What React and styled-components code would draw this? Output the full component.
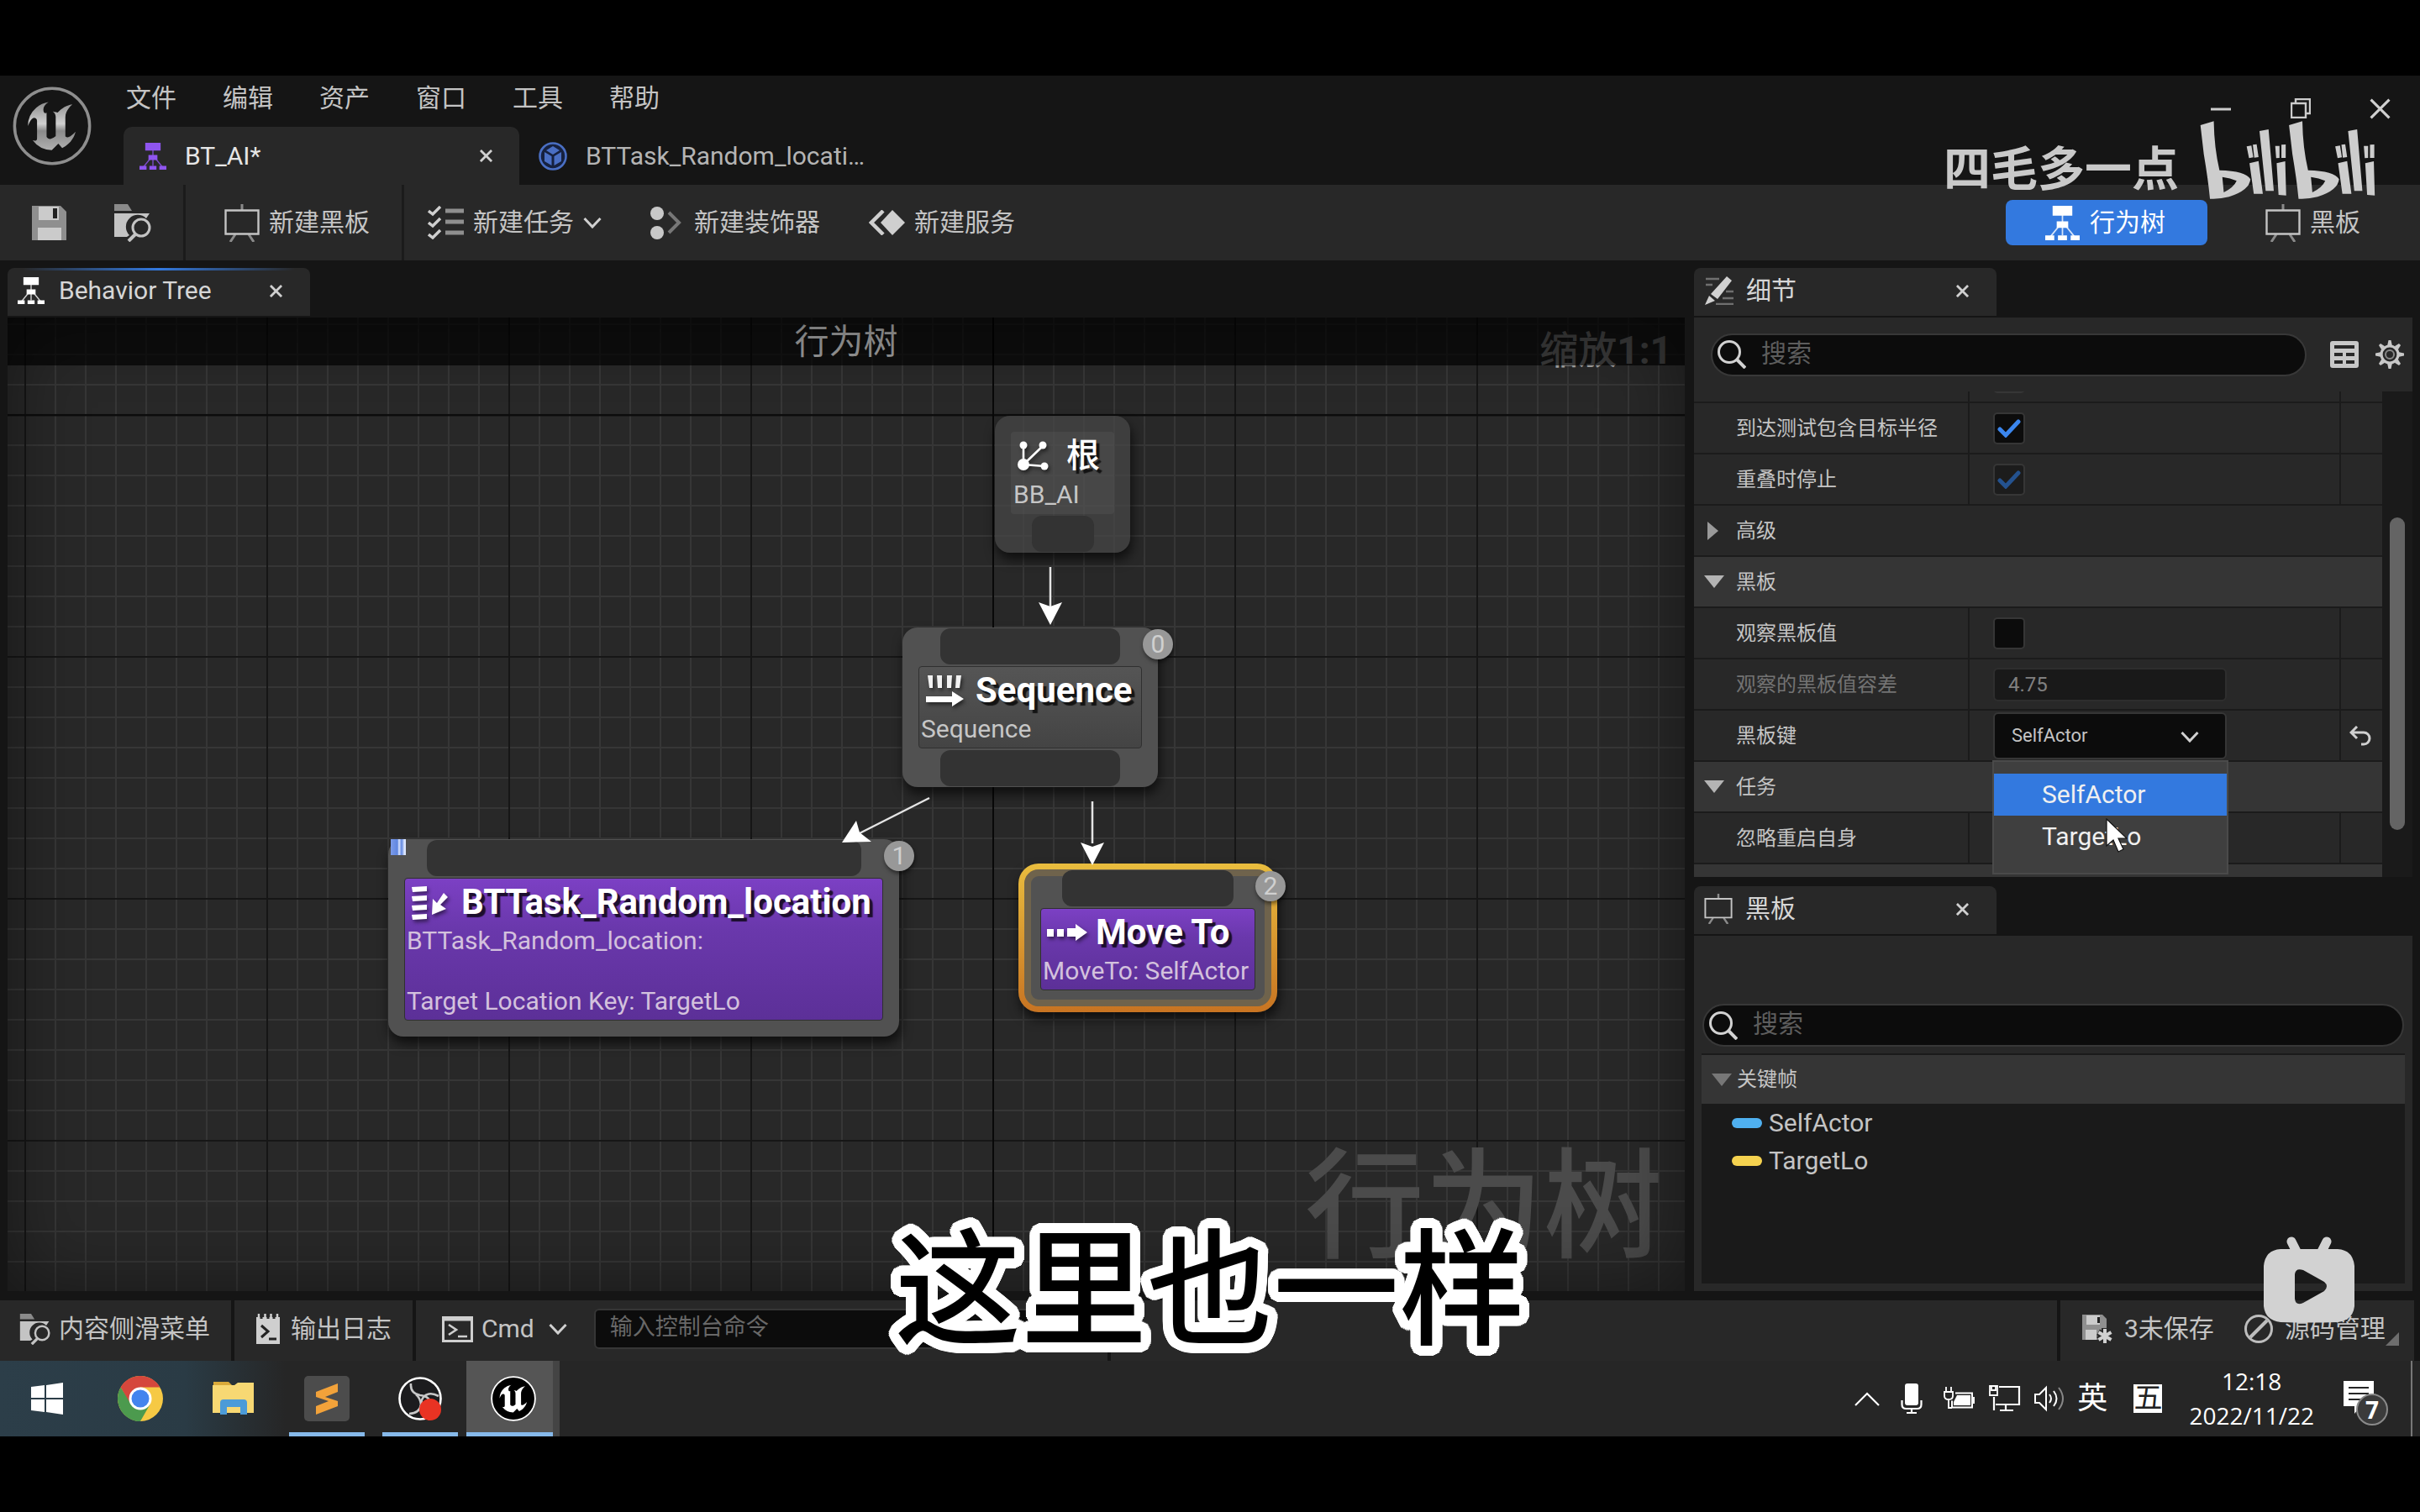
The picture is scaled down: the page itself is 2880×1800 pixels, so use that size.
import React from "react";
import styled, { createGlobalStyle, css } from "styled-components";

const c = {
  frame: "#151515",
  panel: "#282828",
  header: "#353535",
  field: "#0c0c0c",
  line: "#1b1b1b",
  text: "#c4c4c4",
  dim: "#6b6b6b",
  blue: "#3379df",
};

const Global = createGlobalStyle`
  * { box-sizing: border-box; }
  body { margin: 0; background: #000; }
  button, input, select { font: inherit; color: inherit; margin: 0; padding: 0; border: 0; background: none; }
  svg { display: block; flex: none; }
`;

/* ---------- icons ---------- */

const Svg = ({ w, h, vb, children, ...rest }) => (
  <svg width={w} height={h} viewBox={vb || `0 0 ${w} ${h}`} fill="none" aria-hidden="true" {...rest}>
    {children}
  </svg>
);

const U_MARK =
  "M19.13 13.729c-.206.997-1.126 3.557-4.06 4.942l-1.179-1.325-1.988 2a7.338 7.338 0 01-5.804-2.978 2.859 2.859 0 00.65.123c.326.006.678-.114.678-.66v-5.394a.89.89 0 00-1.116-.89c-.92.212-1.656 2.509-1.656 2.509a7.304 7.304 0 012.528-5.597 7.408 7.408 0 013.73-1.721c-1.006.573-1.57 1.507-1.57 2.29 0 1.262.76 1.109.984.923v7.28a1.157 1.157 0 00.148.256 1.075 1.075 0 00.88.445c.76 0 1.747-.868 1.747-.868V9.172c0-.6-.452-1.324-.905-1.572 0 0 .838.149 1.484.346a5.537 5.537 0 01.387-.425c1.508-1.48 2.929-1.902 4.112-2.112 0 0-2.151 1.69-2.151 3.96 0 1.687.043 5.801.043 5.801.799.771 1.986-.342 3.059-1.441Z";

const UnrealLogo = () => (
  <Svg w={94} h={94} vb="0 0 24 24">
    <defs>
      <linearGradient id="metal" x1="0" y1="0" x2="0" y2="1">
        <stop offset="0" stopColor="#8c8c8c" />
        <stop offset="0.45" stopColor="#d0d0d0" />
        <stop offset="0.6" stopColor="#8a8a8a" />
        <stop offset="1" stopColor="#b0b0b0" />
      </linearGradient>
    </defs>
    <circle cx="12" cy="12" r="11.4" stroke="#8e8e8e" strokeWidth="0.9" />
    <path d={U_MARK} fill="url(#metal)" />
  </Svg>
);

const UnrealApp = () => (
  <Svg w={54} h={54} vb="0 0 24 24">
    <circle cx="12" cy="12" r="11.5" fill="#000" stroke="#fff" strokeWidth="0.8" />
    <path d={U_MARK} fill="#fff" />
  </Svg>
);

const TreeIcon = ({ w = 32, h = 34, color = "#fff" }) => (
  <Svg w={w} h={h} vb="0 0 42 42">
    <g stroke={color} strokeWidth="1.8" opacity=".8">
      <path d="M21 10V36M19 22L6 38M23 22L36 38" />
    </g>
    <g fill={color}>
      <path d="M9 0h24v12H9zM14 19h14v8H14zM0 36h11v6H0zM15.500 36h11v6h-11zM31 36h11v6H31z" />
    </g>
  </Svg>
);

const TaskAssetIcon = () => (
  <Svg w={34} h={34}>
    <circle cx="17" cy="17" r="15.500" fill="#16213f" stroke="#4a6fc4" strokeWidth="2.600" />
    <path d="M17 5l8 5-8 5-8-5zM7 12l8.500 5v11L7 23zM27 12l-8.500 5v11L27 23z" fill="#4a6fc4" />
  </Svg>
);

const CloseIcon = ({ s = 15, t = 3 }) => (
  <Svg w={s} h={s} vb="0 0 16 16">
    <path d="M1 1L15 15M15 1L1 15" stroke="#d0d0d0" strokeWidth={t} />
  </Svg>
);

const SaveIcon = () => (
  <Svg w={41} h={41}>
    <path d="M0 0h34l7 7v34H0z" fill="#8f8f8f" />
    <path d="M8 1h24v16H8zM7 26h28v15H7z" fill="#cbcbcb" />
    <path d="M25 3h5v12h-5z" fill="#222" />
  </Svg>
);

const BrowseIcon = ({ s = 45 }) => (
  <Svg w={s} h={s} vb="0 0 45 45">
    <path d="M1 8V0h16l5 8z" fill="#8a8a8a" />
    <path d="M1 11h42l-4 6a13 13 0 0 0-20 20l-3 2H1z" fill="#c4c4c4" />
    <circle cx="33" cy="28" r="10" stroke="#c4c4c4" strokeWidth="3" />
    <path d="M26 36l-8 8" stroke="#c4c4c4" strokeWidth="4" />
  </Svg>
);

const EaselIcon = ({ w = 42, h = 45 }) => (
  <Svg w={w} h={h} vb="0 0 42 45">
    <path d="M21 0v7M13 36l-6 9M29 36l6 9" stroke="#8a8a8a" strokeWidth="3" />
    <path d="M1.500 7.500h39v28h-39z" stroke="#c4c4c4" strokeWidth="2.400" />
  </Svg>
);

const TasksIcon = () => (
  <Svg w={43} h={40}>
    <path d="M1 6l5 4 9-9M1 20l5 4 9-9M1 34l5 4 9-9" stroke="#d0d0d0" strokeWidth="3.400" />
    <path d="M21 6h22M21 19h22M21 32h22" stroke="#8f8f8f" strokeWidth="5" />
  </Svg>
);

const DecoratorIcon = () => (
  <Svg w={41} h={40}>
    <circle cx="8" cy="9" r="8" fill="#c8c8c8" />
    <circle cx="8" cy="32" r="8" fill="#c8c8c8" />
    <path d="M22 8l12 12-12 12" stroke="#777" strokeWidth="4" />
  </Svg>
);

const ServiceIcon = () => (
  <Svg w={43} h={30}>
    <path d="M28 0l15 15-15 15-14-15z" fill="#cfcfcf" />
    <path d="M17 1L3 15l14 14" stroke="#cfcfcf" strokeWidth="4.500" />
  </Svg>
);

const Chevron = ({ w = 22, color = "#d0d0d0", t = 3 }) => (
  <Svg w={w} h={14} vb="0 0 22 14">
    <path d="M1.500 2L11 12 20.500 2" stroke={color} strokeWidth={t} />
  </Svg>
);

const PencilIcon = () => (
  <Svg w={36} h={34}>
    <path d="M2 3h16M2 10h8M26 18h9M22 26h13M14 33h21" stroke="#6f6f6f" strokeWidth="2.500" />
    <path d="M27 0l6 5-17 22-8-6zM6 23l7 6-12 5z" fill="#d0d0d0" />
  </Svg>
);

const SearchIcon = () => (
  <Svg w={34} h={34}>
    <circle cx="14" cy="14" r="12.500" stroke="#d2d2d2" strokeWidth="3" />
    <path d="M23 23l10 10" stroke="#d2d2d2" strokeWidth="4" />
  </Svg>
);

const GridIcon = () => (
  <Svg w={34} h={32}>
    <rect width="34" height="32" rx="3" fill="#c8c8c8" />
    <path d="M5 5h24v4H5zM5 14h10v4H5zM19 14h10v4H19zM5 23h10v4H5zM19 23h10v4H19z" fill="#282828" />
  </Svg>
);

const GearIcon = () => (
  <Svg w={34} h={34} vb="-17 -17 34 34">
    {[0, 45, 90, 135, 180, 225, 270, 315].map((a) => (
      <path key={a} d="M-2.800 -11L-1.500 -17h3L2.800 -11z" fill="#c8c8c8" transform={`rotate(${a})`} />
    ))}
    <circle r="10" stroke="#c8c8c8" strokeWidth="3.200" />
    <circle r="5" stroke="#888" strokeWidth="2" />
  </Svg>
);

const Tick = ({ dim }) => (
  <Svg w={28} h={22}>
    <path d="M3 12l7 7L25 3" stroke={dim ? "#24528f" : "#3b86ee"} strokeWidth="5" strokeLinecap="round" />
  </Svg>
);

const ResetIcon = () => (
  <Svg w={27} h={24}>
    <path d="M9 1L2 8l7 7M2 8h15a7 7 0 0 1 0 14h-3" stroke="#d0d0d0" strokeWidth="3" />
  </Svg>
);

const Cursor = styled.svg`
  position: absolute;
  left: 133px;
  top: 67px;
  pointer-events: none;
`;

const TriRight = () => (
  <Svg w={15} h={24}>
    <path d="M1 1l13 11L1 23z" fill="#9a9a9a" />
  </Svg>
);
const TriDown = ({ color = "#b4b4b4" }) => (
  <Svg w={24} h={15}>
    <path d="M0 0h24L12 15z" fill={color} />
  </Svg>
);

const RootIcon = () => (
  <Svg w={38} h={36}>
    <path d="M7 28V5M7 28L31 5M7 28l25 2" stroke="#fff" strokeWidth="2.600" />
    <circle cx="7" cy="28" r="7" fill="#fff" />
    <circle cx="7" cy="5" r="4.500" fill="#fff" />
    <circle cx="30" cy="5" r="4.500" fill="#fff" />
    <circle cx="32" cy="30" r="4.500" fill="#fff" />
  </Svg>
);

const SequenceIcon = () => (
  <Svg w={46} h={38}>
    <path d="M3 1h6v15H5zM14 1h6v15h-5zM26 1h6l-1 15h-5zM37 1h6l-2 15h-5z" fill="#f2f2f2" />
    <path d="M1 26h31v-6l14 9-14 9v-5H1z" fill="#fff" />
  </Svg>
);

const TaskNodeIcon = () => (
  <Svg w={46} h={41}>
    <path d="M1 2l18-1v6L2 8zM1 13l18-1v6L2 19zM1 24l18-1v6L2 30zM1 35l18-1v6L2 41z" fill="#fff" />
    <path d="M39 9l5 5-9 9 7 5-17 7 1-19 5 5z" fill="#fff" />
  </Svg>
);

const MoveIcon = () => (
  <Svg w={48} h={20}>
    <path d="M0 6h8v9H0zM12 6h8v9h-8zM24 5h10V0l14 10-14 10v-5H24z" fill="#fff" />
  </Svg>
);

const LogIcon = () => (
  <Svg w={28} h={36}>
    <path d="M0 4h28v32H0z" fill="#cfcfcf" />
    <path d="M3 0v9M10.500 0v9M17.500 0v9M25 0v9" stroke="#cfcfcf" strokeWidth="2.500" />
    <path d="M6 0v6M14 0v6M21 0v6" stroke="#282828" strokeWidth="3" />
    <path d="M6 14l8 7-8 7M15 30h9" stroke="#222" strokeWidth="3" />
  </Svg>
);

const CmdIcon = () => (
  <Svg w={37} h={31}>
    <path d="M1.500 1.500h34v28h-34zM1 4h35" stroke="#cfcfcf" strokeWidth="3" />
    <path d="M8 10l9 6-9 6M19 24h11" stroke="#cfcfcf" strokeWidth="2.600" />
  </Svg>
);

const UnsavedIcon = () => (
  <Svg w={36} h={34}>
    <path d="M0 0h24l5 5v25H0z" fill="#8f8f8f" />
    <path d="M5 1h16v11H5zM4 18h13v12H4z" fill="#cbcbcb" />
    <path d="M18 3h3v7h-3z" fill="#222" />
    <path d="M27 16v18M19 21l16 9M35 21l-16 9" stroke="#282828" strokeWidth="8" />
    <path d="M27 17v17M19.500 21l15 9M34.500 21l-15 9" stroke="#d0d0d0" strokeWidth="4" />
  </Svg>
);

const NoSourceIcon = () => (
  <Svg w={34} h={34}>
    <circle cx="17" cy="17" r="15.500" stroke="#bdbdbd" strokeWidth="3" />
    <path d="M27 7L7 27" stroke="#bdbdbd" strokeWidth="4" />
  </Svg>
);

const WindowsIcon = () => (
  <Svg w={38} h={38}>
    <path d="M0 5l16-2v15H0zM18 3l20-3v18H18zM0 20h16v15L0 33zM18 20h20v18l-20-3z" fill="#fff" />
  </Svg>
);

const ChromeIcon = () => (
  <Svg w={54} h={54} vb="-27 -27 54 54">
    <circle r="27" fill="#f6c944" />
    <path d="M-23.400 -13.500A27 27 0 0 1 23.400 -13.500H0L-12 7z" fill="#d5473c" />
    <path d="M-23.400 -13.500A27 27 0 0 0 0 27L11.500 7-11 7z" fill="#4c9a4e" />
    <circle r="13.500" fill="#fff" />
    <circle r="10.500" fill="#4384ee" />
  </Svg>
);

const FolderIcon = () => (
  <Svg w={50} h={40}>
    <path d="M1 0h18l5 5H1z" fill="#d9a93a" />
    <path d="M0 4h26l4-3h19v36H0z" fill="#f7d873" />
    <path d="M9 39V25q0-4 4-4h24q4 0 4 4v14h-8V30H17v9z" fill="#4c9bd8" />
  </Svg>
);

const SublimeIcon = () => (
  <Svg w={54} h={54}>
    <rect width="54" height="54" rx="5" fill="#4c4c4c" />
    <path d="M14 19l26-10v10l-15 6 15 5v6l-26 10v-10l15-6-15-5z" fill="#f2a23a" />
  </Svg>
);

const ObsIcon = () => (
  <Svg w={54} h={54}>
    <circle cx="27" cy="27" r="24.500" fill="#1c1c1e" stroke="#fff" strokeWidth="2.600" />
    <path d="M16 9Q15 21 27 23Q37 24 39 31" stroke="#c8c8c8" strokeWidth="2.600" />
    <path d="M49 24Q38 18 31 25Q27 30 29 36" stroke="#c8c8c8" strokeWidth="2.600" />
    <path d="M14 45Q27 44 28 34Q27 26 22 22" stroke="#c8c8c8" strokeWidth="2.600" />
    <circle cx="39" cy="40" r="13" fill="#e93323" />
  </Svg>
);

const TrayUp = () => (
  <Svg w={30} h={17}>
    <path d="M1 16L15 2l14 14" stroke="#fff" strokeWidth="2.200" />
  </Svg>
);
const MicIcon = () => (
  <Svg w={26} h={36}>
    <rect x="5" width="16" height="26" rx="3" fill="#fff" />
    <path d="M1.500 20v5q0 5 5 5h13q5 0 5-5v-5M13 30v5M7 35h12" stroke="#fff" strokeWidth="2.200" />
  </Svg>
);
const BatteryIcon = () => (
  <Svg w={38} h={28}>
    <path d="M3 0v5M9 0v5M1 6h10v5q0 4-5 4-5 0-5-4zM6 15v10h4" stroke="#fff" strokeWidth="1.800" />
    <path d="M14 7.500h20v17H10v-8M36 12v8" stroke="#fff" strokeWidth="2" />
    <path d="M16 10h16v12H12v-4z" fill="#fff" />
  </Svg>
);
const NetworkIcon = () => (
  <Svg w={38} h={32}>
    <path d="M12 2h24v21H8M20 23v7M13 30h16M6 14v16" stroke="#fff" strokeWidth="2.200" />
    <path d="M1 1h9v11H1zM3 1v5h5V1" stroke="#fff" strokeWidth="1.800" />
  </Svg>
);
const SpeakerIcon = () => (
  <Svg w={38} h={32}>
    <path d="M1 11h5l8-8v26l-8-8H1z" stroke="#fff" strokeWidth="2" />
    <path d="M18 11q4 5 0 10M23 7q7 9 0 18" stroke="#fff" strokeWidth="2" />
    <path d="M29 3q10 13 0 26" stroke="#888" strokeWidth="2" />
  </Svg>
);
const NoteIcon = () => (
  <Svg w={54} h={54}>
    <path d="M0 0h36v30H20l-7 9v-9H0z" fill="#fff" />
    <path d="M6 8h24M6 15h24M6 22h15" stroke="#262626" strokeWidth="2.200" />
    <circle cx="34" cy="34" r="18" fill="#3b3b3b" stroke="#8a8a8a" strokeWidth="2" />
  </Svg>
);

/* ---------- page frame ---------- */

const Screen = styled.div`
  position: relative;
  display: flex;
  flex-direction: column;
  min-height: 100vh;
  padding: 90px 0;
  background: #000;
  color: ${c.text};
  font: 400 30px/36px Roboto, "Noto Sans CJK SC", sans-serif;
  overflow: hidden;
`;

const Editor = styled.main`
  flex: 1;
  display: flex;
  flex-direction: column;
  background: ${c.frame};
`;

const TitleBar = styled.header`
  display: flex;
  height: 130px;
`;
const LogoSlot = styled.div`
  width: 147px;
  padding: 13px 15px;
`;
const TitleMain = styled.div`
  flex: 1;
  display: flex;
  flex-direction: column;
  justify-content: space-between;
`;
const MenuBar = styled.nav`
  display: flex;
  gap: 55px;
  padding: 9px 3px;
`;
const MenuItem = styled.button``;
const DocTabs = styled.div`
  display: flex;
`;
const DocTab = styled.div`
  display: flex;
  align-items: center;
  width: 471px;
  height: 69px;
  padding: 0 32px 0 ${(p) => (p.$active ? 19 : 23)}px;
  gap: 22px;
  border-radius: 10px 10px 0 0;
  background: ${(p) => (p.$active ? c.panel : "none")};
  color: ${(p) => (p.$active ? "#e6e6e6" : "#b4b4b4")};
`;
const TabText = styled.span`
  flex: 1;
  white-space: nowrap;
`;
const TabClose = styled.button`
  display: grid;
  place-items: center;
  width: 16px;
  height: 32px;
`;
const WindowButtons = styled.div`
  display: flex;
`;
const WindowButton = styled.button`
  display: grid;
  place-items: center;
  width: 95px;
  height: 78px;
`;

const Toolbar = styled.div`
  display: flex;
  height: 90px;
  background: ${c.panel};
`;
const ToolGroup = styled.div`
  display: flex;
  align-items: center;
  gap: ${(p) => p.$gap || 56}px;
  padding: 0 38px 0 ${(p) => p.$left}px;
  & + & { border-left: 3px solid ${c.line}; }
  &:last-child { border: 0; margin-left: auto; padding-right: 71px; }
`;
const ToolButton = styled.button`
  display: flex;
  align-items: center;
  gap: ${(p) => p.$gap || 11}px;
  white-space: nowrap;
`;
const ModeButton = styled(ToolButton)`
  height: 54px;
  justify-content: center;
  ${(p) =>
    p.$active &&
    css`
      width: 240px;
      padding-right: 4px;
      border-radius: 8px;
      background: ${c.blue};
      color: #fff;
    `}
`;

const Workspace = styled.div`
  flex: 1;
  display: grid;
  grid-template-columns: minmax(0, 1fr) 855px;
  gap: 11px;
  padding: 9px 9px 11px;
`;
const Column = styled.div`
  display: flex;
  flex-direction: column;
  gap: 11px;
  min-width: 0;
`;
const Dock = styled.section`
  display: flex;
  flex-direction: column;
  gap: 2px;
  flex: ${(p) => (p.$grow ? "1" : "none")};
`;
const DockTab = styled.div`
  display: flex;
  align-items: center;
  gap: ${(p) => p.$gap || 17}px;
  width: 360px;
  height: 57px;
  padding: 0 33px 3px 12px;
  border-radius: 8px 8px 0 0;
  background: ${(p) =>
    p.$focused
      ? `linear-gradient(90deg, transparent 5%, ${c.blue} 50%, transparent 95%) top / 100% 3px no-repeat, ${c.panel}`
      : c.panel};
  color: #d6d6d6;
`;

/* ---------- graph ---------- */

const Graph = styled.div`
  position: relative;
  flex: 1;
  overflow: hidden;
  background-color: #282828;
  background-image:
    linear-gradient(90deg, #080808 2px, transparent 2px),
    linear-gradient(#0c0c0c 2px, transparent 2px),
    linear-gradient(90deg, #161616 2px, transparent 2px),
    linear-gradient(#161616 2px, transparent 2px),
    linear-gradient(90deg, #363636 2px, transparent 2px),
    linear-gradient(#363636 2px, transparent 2px);
  background-size: 3000px 100%, 100% 3000px, 288px 100%, 100% 288px, 36px 100%, 100% 36px;
  background-position: 1172px 0, 0 115px, 20px 0, 0 115px, 20px 0, 0 7px;
  &::after {
    content: "";
    position: absolute;
    inset: 0;
    box-shadow: inset 0 0 90px rgba(0, 0, 0, 0.45);
    pointer-events: none;
  }
`;
const GraphTitle = styled.h1`
  position: absolute;
  inset: 0 0 auto;
  height: 57px;
  margin: 0;
  background: rgba(0, 0, 0, 0.66);
  color: #979797;
  font-size: 41px;
  font-weight: 400;
  line-height: 58px;
  text-align: center;
`;
const ZoomLabel = styled.span`
  position: absolute;
  right: 15px;
  top: 12px;
  color: #a0a0a0;
  font-size: 46px;
  font-weight: 500;
  line-height: 54px;
  b { font-weight: 700; }
`;
const GraphMark = styled.div`
  position: absolute;
  right: 26px;
  bottom: 14px;
  color: #4b4b4b;
  font-size: 142px;
  font-weight: 500;
  line-height: 170px;
`;
const Wires = styled.svg`
  position: absolute;
  inset: 0;
  width: 100%;
  height: 100%;
`;
const Node = styled.article`
  position: absolute;
  left: ${(p) => p.$x}px;
  top: ${(p) => p.$y}px;
  width: ${(p) => p.$w}px;
  display: flex;
  flex-direction: column;
  align-items: center;
  gap: 2px;
  padding: 1px 19px;
  border-radius: 18px;
  background: #515151;
  box-shadow: 2px 8px 14px rgba(0, 0, 0, 0.65);
  ${(p) => p.$leaf && "padding-bottom: 19px;"}
  ${(p) =>
    p.$root &&
    css`
      padding-top: 19px;
      background: rgba(70, 70, 70, 0.72);
    `}
  ${(p) =>
    p.$selected &&
    css`
      border: 7px solid transparent;
      border-radius: 24px;
      background:
        linear-gradient(#525252, #525252) padding-box,
        linear-gradient(#e9bd3e, #c87422) border-box;
      box-shadow: inset 0 0 0 8px rgba(200, 150, 60, 0.25), 2px 8px 14px rgba(0, 0, 0, 0.65);
    `}
`;
const Pin = styled.div`
  width: ${(p) => p.$w}px;
  height: 43px;
  border-radius: 12px;
  background: #333;
`;
const NodeBody = styled.div`
  align-self: stretch;
  padding: 0 2px 4px;
  border-radius: 4px;
  border: 1px solid ${(p) => (p.$root ? "transparent" : "#303030")};
  background: ${(p) =>
    p.$task ? "linear-gradient(#7c40c4, #6a38ac 35%, #5c3098)" : p.$root ? "rgba(90,90,90,.35)" : "linear-gradient(#555, #444)"};
  color: ${(p) => (p.$task ? "#d3c1dd" : "#c6c6c6")};
  white-space: pre-line;
`;
const NodeTitle = styled.h2`
  display: flex;
  align-items: center;
  gap: ${(p) => p.$gap || 14}px;
  margin: 0;
  padding-left: 5px;
  color: #fff;
  font-size: ${(p) => (p.$root ? 40 : 42)}px;
  font-weight: ${(p) => (p.$root ? 500 : 700)};
  line-height: 56px;
  text-shadow: 4px 4px 1px rgba(0, 0, 0, 0.75);
  white-space: nowrap;
  svg { filter: drop-shadow(2px 3px 2px rgba(0, 0, 0, 0.5)); }
`;
const NodeText = styled.p`
  margin: 0;
`;
const Order = styled.span`
  position: absolute;
  right: ${(p) => (p.$selected ? -17 : -18)}px;
  top: 2px;
  width: 36px;
  height: 36px;
  border-radius: 50%;
  background: #989898;
  color: #d0d0d0;
  line-height: 36px;
  text-align: center;
  box-shadow: 1px 3px 5px rgba(0, 0, 0, 0.5);
`;
const Marker = styled.i`
  position: absolute;
  left: 3px;
  top: 0;
  width: 18px;
  height: 19px;
  background: linear-gradient(90deg, #7c9bea, #5f86e0 45%, #dce6ff 55%, #5f86e0 72%, #dce6ff 90%);
`;

/* ---------- details ---------- */

const SearchBar = styled.div`
  display: flex;
  align-items: center;
  gap: 20px;
  height: 88px;
  padding: 0 10px 0 20px;
  background: ${c.panel};
  > label { margin-right: 8px; }
`;
const SearchField = styled.label`
  flex: 1;
  display: flex;
  align-items: center;
  gap: 18px;
  height: 51px;
  padding-left: 6px;
  border: 2px solid #383838;
  border-radius: 26px;
  background: ${c.field};
  input { flex: 1; min-width: 0; padding-bottom: 3px; outline: none; }
  input::placeholder { color: #5d5d5d; opacity: 1; }
`;
const IconButton = styled.button`
  display: grid;
  place-items: center;
`;
const ScrollArea = styled.div`
  display: flex;
  height: 578px;
  margin-top: -2px;
  overflow: hidden;
  background: #1a1a1a;
`;
const Rows = styled.div`
  flex: 1;
  margin-top: -47px;
  font-size: 24px;
`;
const Gutter = styled.div`
  width: 36px;
  padding: 150px 9px 0;
`;
const Thumb = styled.div`
  width: 18px;
  height: 372px;
  border-radius: 9px;
  background: #646464;
`;
const Row = styled.div`
  display: grid;
  grid-template-columns: 326px 1fr 51px;
  height: 61px;
  border-bottom: 2px solid ${c.line};
  background: ${(p) => (p.$header ? c.header : c.panel)};
  color: ${(p) => (p.$dim ? "#737373" : c.text)};
`;
const NameCell = styled.label`
  display: flex;
  align-items: center;
  padding-left: 50px;
`;
const Cell = styled.div`
  display: flex;
  align-items: center;
  padding-left: ${(p) => (p.$last ? 10 : 28)}px;
  border-left: 2px solid ${c.line};
`;
const Fold = styled.button`
  display: grid;
  grid-template-columns: 38px auto;
  grid-column: 1 / -1;
  justify-content: start;
  align-items: center;
  padding-left: 12px;
  text-align: left;
  svg { margin-left: ${(p) => (p.$closed ? 3 : 0)}px; }
`;
const CheckWrap = styled.span`
  position: relative;
  display: grid;
  place-items: center;
  width: 38px;
  height: 38px;
  input {
    position: absolute;
    inset: 0;
    appearance: none;
    border: 2px solid #363636;
    border-radius: 5px;
    background: ${(p) => (p.$dim ? "#1c1c1c" : c.field)};
  }
  svg { position: relative; pointer-events: none; }
`;
const NumberBox = styled.input`
  && {
    width: 278px;
    height: 40px;
    padding: 0 16px;
    border: 2px solid #2e2e2e;
    border-radius: 6px;
    background: #191919;
    color: #808080;
  }
`;
const SelectWrap = styled.div`
  position: relative;
  width: 278px;
  > svg { position: absolute; right: 33px; top: 22px; pointer-events: none; }
  select {
    display: block;
    appearance: none;
    width: 278px;
    height: 56px;
    padding: 0 20px;
    border: 2px solid #363636;
    border-radius: 6px;
    background: ${c.field};
    font-size: 22px;
  }
`;
const Options = styled.ul`
  position: absolute;
  z-index: 2;
  left: -1px;
  top: 57px;
  width: 281px;
  margin: 0;
  padding: 14px 0 18px;
  list-style: none;
  border: 2px solid #4a4a4a;
  background: #3f3f3f;
  color: #f0f0f0;
  font-size: 30px;
`;
const Option = styled.li`
  padding-left: 57px;
  line-height: 50px;
  background: ${(p) => (p.$on ? c.blue : "none")};
`;

/* ---------- blackboard ---------- */

const BoardBody = styled.div`
  flex: 1;
  display: flex;
  flex-direction: column;
  gap: 8px;
  padding: 81px 9px 9px;
  background: ${c.panel};
`;
const BoardSearch = styled.div`
  display: flex;
  padding: 0 1px;
`;
const KeyPane = styled.div`
  flex: 1;
  border-top: 2px solid #1a1a1a;
  background: #1a1a1a;
`;
const KeyHeader = styled.button`
  display: flex;
  align-items: center;
  gap: 6px;
  width: 100%;
  height: 58px;
  padding-left: 12px;
  && { background: ${c.header}; font-size: 24px; }
`;
const Keys = styled.ul`
  margin: 0;
  padding: 0 0 0 36px;
  list-style: none;
`;
const Key = styled.li`
  display: flex;
  align-items: center;
  gap: 8px;
  height: 45px;
  &::before {
    content: "";
    width: 36px;
    height: 12px;
    border-radius: 6px;
    background: ${(p) => p.$color};
  }
`;

/* ---------- status bar and taskbar ---------- */

const StatusBar = styled.footer`
  display: flex;
  gap: 4px;
  height: 72px;
  padding-right: 7px;
`;
const StatusItem = styled.div`
  position: relative;
  display: flex;
  align-items: center;
  gap: ${(p) => p.$gap || 11}px;
  flex: ${(p) => (p.$grow ? "1" : "none")};
  width: ${(p) => (p.$w ? `${p.$w}px` : "auto")};
  padding: 0 16px 4px ${(p) => p.$left || 26}px;
  background: ${c.panel};
  white-space: nowrap;
`;
const Grip = styled.i`
  position: absolute;
  right: 18px;
  bottom: 18px;
  border: 8px solid;
  border-color: transparent #6e6e6e #6e6e6e transparent;
`;
const Console = styled.input`
  && {
    flex: 1;
    min-width: 0;
    height: 48px;
    margin-left: 22px;
    padding: 0 17px 4px;
    border: 2px solid #363636;
    border-radius: 6px;
    background: ${c.field};
    font-size: 27px;
  }
  &::placeholder { color: #686868; opacity: 1; }
`;
const Taskbar = styled.footer`
  display: flex;
  height: 90px;
  background: linear-gradient(90deg, #2c3e49 0, #2a3b45 220px, #262626 340px);
  color: #fff;
`;
const AppButton = styled.button`
  display: grid;
  place-items: center;
  width: 111px;
  background-image: ${(p) => (p.$open ? "linear-gradient(#86b9ea, #86b9ea)" : "none")};
  background-size: ${(p) => (p.$active ? "100%" : "90px")} 5px;
  background-position: bottom;
  background-repeat: no-repeat;
  ${(p) => p.$active && "background-color: #555; box-shadow: inset -8px 0 #444;"}
`;
const Tray = styled.div`
  display: flex;
  align-items: center;
  margin-left: auto;
  padding-right: 9px;
  gap: 16px;
  > svg:nth-child(-n + 2) { margin-right: 9px; }
`;
const Lang = styled.span`
  margin: 0 15px 0 -3px;
  font-size: 36px;
  line-height: 40px;
`;
const Ime = styled.span`
  width: 34px;
  height: 34px;
  background: #fff;
  color: #222;
  font-size: 34px;
  line-height: 32px;
  text-align: center;
`;
const Clock = styled.time`
  margin-left: 16px;
  font: 400 28px/41px "Open Sans", sans-serif;
  text-align: center;
`;
const Notices = styled.button`
  position: relative;
  margin: 0 10px 0 19px;
  padding-top: 12px;
  span { position: absolute; left: 26px; top: 29px; font: 700 28px/34px "Open Sans", sans-serif; }
`;
const ShowDesktop = styled.div`
  width: 2px;
  height: 90px;
  background: #777;
`;

/* ---------- video overlay ---------- */

const Uploader = styled.div`
  position: absolute;
  top: 144px;
  right: 51px;
  display: flex;
  align-items: flex-start;
  gap: 24px;
  color: #c9c9c9;
  font: 700 56px/106px "Noto Sans CJK SC", sans-serif;
`;

const outline = Array.from({ length: 36 }, (_, i) => {
  const a = (i * Math.PI) / 18;
  return `${Math.round(12 * Math.cos(a))}px ${Math.round(12 * Math.sin(a))}px #fff`;
}).join(", ");

const Subtitle = styled.p`
  position: absolute;
  inset: auto 0 186px;
  margin: 0;
  color: #000;
  font: 500 150px/180px "Noto Sans CJK SC", sans-serif;
  text-align: center;
  text-shadow: ${outline};
  pointer-events: none;
`;
const PlayerMark = styled.svg`
  position: absolute;
  right: 77px;
  bottom: 225px;
`;

const WORD_PART = (
  <>
    <path
      fillRule="evenodd"
      d="M1105 207L1133 193Q1134 290 1145 368Q1200 370 1210 400Q1208 440 1165 463Q1145 472 1125 470Q1121 400 1112 310ZM1151 392L1154 447Q1175 430 1181 406Q1168 396 1151 392Z"
    />
    <path d="M1202 283l10-3 4 42-9 3zM1215 277l8-2 4 46-9 2zM1208 343l19-8 9 117h-19zM1229 228l19-6 11 220h-17zM1262 281h9v43l-7 1zM1275 277l9-1v48h-9zM1265 343l18-7 2 122-16-2z" />
  </>
);

const Wordmark = () => (
  <svg width="212" height="94" viewBox="1102 192 374 282" preserveAspectRatio="none" fill="#cdcdcd" aria-label="bilibili">
    {WORD_PART}
    <g transform="translate(186 0)">{WORD_PART}</g>
  </svg>
);

const Check = ({ id, checked, dim }) => (
  <CheckWrap $dim={dim}>
    <input id={id} type="checkbox" defaultChecked={checked} disabled={dim} />
    {checked && <Tick dim={dim} />}
  </CheckWrap>
);

const Property = ({ id, label, dim, reset, children }) => (
  <Row $dim={dim}>
    <NameCell htmlFor={id}>{label}</NameCell>
    <Cell>{children}</Cell>
    <Cell $last>{reset}</Cell>
  </Row>
);

const Section = ({ label, closed }) => (
  <Row $header={!closed}>
    <Fold $closed={closed}>
      {closed ? <TriRight /> : <TriDown />}
      {label}
    </Fold>
  </Row>
);

const Close = () => (
  <TabClose aria-label="关闭">
    <CloseIcon />
  </TabClose>
);

export default function App() {
  return (
    <Screen>
      <Global />
      <Editor>
        <TitleBar>
          <LogoSlot>
            <UnrealLogo />
          </LogoSlot>
          <TitleMain>
            <MenuBar>
              {["文件", "编辑", "资产", "窗口", "工具", "帮助"].map((m) => (
                <MenuItem key={m}>{m}</MenuItem>
              ))}
            </MenuBar>
            <DocTabs>
              <DocTab $active>
                <TreeIcon color="#8f55f0" />
                <TabText>BT_AI*</TabText>
                <Close />
              </DocTab>
              <DocTab>
                <TaskAssetIcon />
                <TabText>BTTask_Random_locati…</TabText>
              </DocTab>
            </DocTabs>
          </TitleMain>
          <WindowButtons>
            <WindowButton aria-label="最小化">
              <Svg w={24} h={24}><path d="M0 13h24" stroke="#ccc" strokeWidth="3" /></Svg>
            </WindowButton>
            <WindowButton aria-label="还原">
              <Svg w={24} h={24}><path d="M1 6h17v17H1zM6 6V1h17v17h-5" stroke="#ccc" strokeWidth="2.400" /></Svg>
            </WindowButton>
            <WindowButton aria-label="关闭窗口">
              <CloseIcon s={25} t={2} />
            </WindowButton>
          </WindowButtons>
        </TitleBar>

        <Toolbar>
          <ToolGroup $left={38}>
            <ToolButton aria-label="保存"><SaveIcon /></ToolButton>
            <ToolButton aria-label="浏览"><BrowseIcon /></ToolButton>
          </ToolGroup>
          <ToolGroup $left={46}>
            <ToolButton><EaselIcon />新建黑板</ToolButton>
          </ToolGroup>
          <ToolGroup $left={28} $gap={58}>
            <ToolButton><TasksIcon />新建任务<Chevron /></ToolButton>
            <ToolButton><DecoratorIcon />新建装饰器</ToolButton>
            <ToolButton><ServiceIcon />新建服务</ToolButton>
          </ToolGroup>
          <ToolGroup $left={0} $gap={69}>
            <ModeButton $active><TreeIcon w={43} h={41} />行为树</ModeButton>
            <ModeButton><EaselIcon />黑板</ModeButton>
          </ToolGroup>
        </Toolbar>

        <Workspace>
          <Dock $grow>
            <DockTab $focused>
              <TreeIcon />
              <TabText>Behavior Tree</TabText>
              <Close />
            </DockTab>
            <Graph>
              <GraphMark>行为树</GraphMark>
              <Node $x={1175} $y={117} $w={161} $root>
                <NodeBody $root>
                  <NodeTitle $root $gap={20}><RootIcon />根</NodeTitle>
                  <NodeText>BB_AI</NodeText>
                </NodeBody>
                <Pin $w={74} />
              </Node>
              <Node $x={1065} $y={369} $w={304}>
                <Pin $w={214} />
                <NodeBody>
                  <NodeTitle><SequenceIcon />Sequence</NodeTitle>
                  <NodeText>Sequence</NodeText>
                </NodeBody>
                <Pin $w={214} />
                <Order>0</Order>
              </Node>
              <Node $x={453} $y={621} $w={608} $leaf>
                <Marker />
                <Pin $w={517} />
                <NodeBody $task>
                  <NodeTitle><TaskNodeIcon />BTTask_Random_location</NodeTitle>
                  <NodeText>{"BTTask_Random_location:\n\nTarget Location Key: TargetLo"}</NodeText>
                </NodeBody>
                <Order>1</Order>
              </Node>
              <Node $x={1203} $y={650} $w={308} $leaf $selected>
                <Pin $w={204} />
                <NodeBody $task>
                  <NodeTitle $gap={10}><MoveIcon />Move To</NodeTitle>
                  <NodeText>MoveTo: SelfActor</NodeText>
                </NodeBody>
                <Order $selected>2</Order>
              </Node>
              <Wires aria-hidden="true">
                <g stroke="#e4e4e4" strokeWidth="2.500">
                  <path d="M1241 297v50M1097 572L1010 616M1291 576v50" />
                </g>
                <g fill="#fff">
                  <path d="M1241 366l-14-27 14 5 14-5zM1291 652l-14-27 14 5 14-5zM993 625l17-26 4 14 14 11z" />
                </g>
              </Wires>
              <ZoomLabel>缩放<b>1:1</b></ZoomLabel>
              <GraphTitle>行为树</GraphTitle>
            </Graph>
          </Dock>

          <Column>
            <Dock>
              <DockTab $gap={14}>
                <PencilIcon />
                <TabText>细节</TabText>
                <Close />
              </DockTab>
              <SearchBar>
                <SearchField>
                  <SearchIcon />
                  <input type="text" placeholder="搜索" aria-label="搜索细节" />
                </SearchField>
                <IconButton aria-label="表格视图"><GridIcon /></IconButton>
                <IconButton aria-label="设置"><GearIcon /></IconButton>
              </SearchBar>
              <ScrollArea>
                <Rows>
                  <Property id="p0"><Check id="p0" /></Property>
                  <Property id="p1" label="到达测试包含目标半径"><Check id="p1" checked /></Property>
                  <Property id="p2" label="重叠时停止"><Check id="p2" checked dim /></Property>
                  <Section label="高级" closed />
                  <Section label="黑板" />
                  <Property id="p3" label="观察黑板值"><Check id="p3" /></Property>
                  <Property id="p4" label="观察的黑板值容差" dim>
                    <NumberBox id="p4" type="text" defaultValue="4.75" disabled />
                  </Property>
                  <Property
                    id="p5"
                    label="黑板键"
                    reset={<IconButton aria-label="重置"><ResetIcon /></IconButton>}
                  >
                    <SelectWrap>
                      <select id="p5" defaultValue="SelfActor">
                        <option>SelfActor</option>
                        <option>TargetLo</option>
                      </select>
                      <Chevron />
                      <Options role="listbox">
                        <Option role="option" aria-selected="true" $on>SelfActor</Option>
                        <Option role="option" aria-selected="false">TargetLo</Option>
                        <Cursor width="26" height="42" viewBox="0 0 26 42" aria-hidden="true">
                          <path d="M1 1v32l8-7 6 14 6-3-6-13h10z" fill="#fff" stroke="#111" strokeWidth="1.200" />
                        </Cursor>
                      </Options>
                    </SelectWrap>
                  </Property>
                  <Section label="任务" />
                  <Property id="p6" label="忽略重启自身"><Check id="p6" /></Property>
                  <Row $header />
                </Rows>
                <Gutter>
                  <Thumb />
                </Gutter>
              </ScrollArea>
            </Dock>

            <Dock $grow>
              <DockTab $gap={15}>
                <EaselIcon w={34} h={36} />
                <TabText>黑板</TabText>
                <Close />
              </DockTab>
              <BoardBody>
                <BoardSearch>
                  <SearchField>
                    <SearchIcon />
                    <input type="text" placeholder="搜索" aria-label="搜索黑板" />
                  </SearchField>
                </BoardSearch>
                <KeyPane>
                  <KeyHeader><TriDown color="#777" />关键帧</KeyHeader>
                  <Keys>
                    <Key $color="#4fb0f0">SelfActor</Key>
                    <Key $color="#f5d24f">TargetLo</Key>
                  </Keys>
                </KeyPane>
              </BoardBody>
            </Dock>
          </Column>
        </Workspace>

        <StatusBar>
          <StatusItem $w={275} $left={23} $gap={10}><BrowseIcon s={37} />内容侧滑菜单</StatusItem>
          <StatusItem $w={212} $gap={13}><LogIcon />输出日志</StatusItem>
          <StatusItem $w={823} $left={31} $gap={10}>
            <CmdIcon />
            <ToolButton $gap={17}>Cmd<Chevron /></ToolButton>
            <Console type="text" placeholder="输入控制台命令" aria-label="控制台" />
          </StatusItem>
          <StatusItem $grow />
          <StatusItem $w={421} $gap={14}>
            <UnsavedIcon />
            3未保存
            <Svg w={8} h={4} />
            <NoSourceIcon />
            源码管理
            <Grip />
          </StatusItem>
        </StatusBar>
      </Editor>

      <Taskbar>
        <AppButton aria-label="开始"><WindowsIcon /></AppButton>
        <AppButton aria-label="浏览器"><ChromeIcon /></AppButton>
        <AppButton aria-label="文件资源管理器"><FolderIcon /></AppButton>
        <AppButton aria-label="文本编辑器" $open><SublimeIcon /></AppButton>
        <AppButton aria-label="录制" $open><ObsIcon /></AppButton>
        <AppButton aria-label="虚幻编辑器" $open $active><UnrealApp /></AppButton>
        <Tray>
          <TrayUp />
          <MicIcon />
          <BatteryIcon />
          <NetworkIcon />
          <SpeakerIcon />
          <Lang>英</Lang>
          <Ime>五</Ime>
          <Clock>
            12:18
            <br />
            2022/11/22
          </Clock>
          <Notices aria-label="通知">
            <NoteIcon />
            <span>7</span>
          </Notices>
          <ShowDesktop />
        </Tray>
      </Taskbar>

      <Uploader>
        四毛多一点
        <Wordmark />
      </Uploader>
      <PlayerMark width="109" height="104" viewBox="0 0 109 104" aria-hidden="true">
        <path d="M33 7l9 18M75 7l-9 18" stroke="#d2d2d2" strokeWidth="11" strokeLinecap="round" />
        <path
          fillRule="evenodd"
          fill="#d2d2d2"
          d="M20 16H88Q106 17 108 36V84Q106 101 88 103Q54 104 20 103Q2 101 0 84V36Q2 17 20 16ZM37 46Q38 38 47 41L72 55Q78 60 72 66L47 80Q38 84 37 75Z"
        />
      </PlayerMark>
      <Subtitle>这里也一样</Subtitle>
    </Screen>
  );
}
